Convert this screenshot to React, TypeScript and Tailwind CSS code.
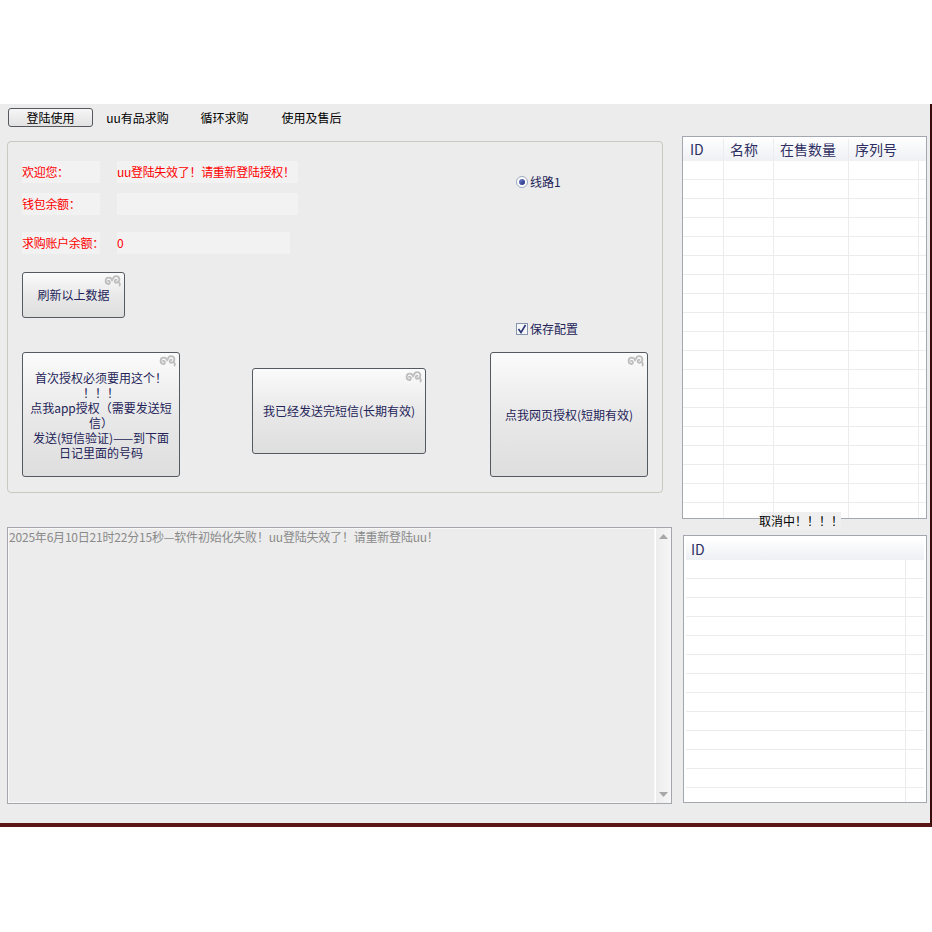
import React from 'react';

const font = "font-['Noto_Sans_CJK_SC',sans-serif]";

function Swirl() {
  return (
    <svg
      className="absolute right-[2px] top-[2px]"
      width="18"
      height="12"
      viewBox="0 0 18 12"
      fill="none"
      stroke="#bdbdbd"
      strokeWidth="1.8"
      strokeLinecap="round"
    >
      <path d="M8 5.5 A3.2 3.2 0 1 0 4.5 9 A1.6 1.6 0 1 0 4 5.8" />
      <path d="M9 4 A3.2 3.2 0 1 1 13 7.5 A2 2 0 0 1 15.5 10.5 M13 7.5 A1.5 1.5 0 1 1 12.5 4.8" />
    </svg>
  );
}

function SkinButton({
  className,
  children,
}: {
  className: string;
  children: React.ReactNode;
}) {
  return (
    <div
      className={`relative flex items-center justify-center rounded-[3px] border border-[#555a60] bg-gradient-to-b from-[#fbfbfb] via-[#e9e9e9] to-[#dedede] text-[12px] text-[#232358] ${className}`}
    >
      <Swirl />
      {children}
    </div>
  );
}

function LabelBox({ w, children }: { w: string; children?: React.ReactNode }) {
  return (
    <div
      className={`flex h-[22px] items-center whitespace-nowrap bg-[#f2f2f2] text-[12px] tracking-[-0.3px] text-[#ff0000] ${w}`}
    >
      {children}
    </div>
  );
}

function Grid({ cols, rows }: { cols: number[]; rows: number }) {
  return (
    <div className="flex flex-col">
      {Array.from({ length: rows }).map((_, r) => (
        <div key={r} className="flex h-[19px] shrink-0 border-b border-[#ececec]">
          {cols.map((c, i) => (
            <div key={i} className="h-full shrink-0 border-r border-[#ececec]" style={{ width: c }} />
          ))}
        </div>
      ))}
    </div>
  );
}

export default function App() {
  const tabs = ['登陆使用', 'uu有品求购', '循环求购', '使用及售后'];

  return (
    <div className={`h-[932px] w-[932px] overflow-hidden bg-white ${font}`}>
      <div className="h-[104px]" />
      <div className="h-[723px] w-[932px] border-b-[4px] border-r-[2px] border-b-[#5a1616] border-r-[#3a0b0b] bg-[#ececec]">
        {/* tabs */}
        <div className="flex gap-[2px] pl-[8px] pt-[4px]">
          {tabs.map((t, i) => (
            <div
              key={t}
              className={`flex h-[19px] w-[85px] items-center justify-center text-[12px] text-black ${
                i === 0
                  ? 'rounded-[3px] border border-[#55585c] bg-gradient-to-b from-[#f6f6f6] to-[#e2e2e2]'
                  : ''
              }`}
            >
              {t}
            </div>
          ))}
        </div>

        <div className="flex">
          {/* left column */}
          <div className="flex w-[672px] shrink-0 flex-col pl-[7px] pt-[14px]">
            <div className="h-[352px] w-[656px] rounded-[4px] border border-[#c9c9bf] pl-[14px] pt-[19px]">
              <div className="flex">
                <div className="flex w-[494px] shrink-0 flex-col">
                  <div className="flex gap-[17px]">
                    <LabelBox w="w-[78px]">欢迎您：</LabelBox>
                    <LabelBox w="w-[181px]">uu登陆失效了！请重新登陆授权！</LabelBox>
                  </div>
                  <div className="mt-[10px] flex gap-[17px]">
                    <LabelBox w="w-[78px]">钱包余额：</LabelBox>
                    <LabelBox w="w-[181px]" />
                  </div>
                  <div className="mt-[17px] flex gap-[17px]">
                    <LabelBox w="w-[78px]">求购账户余额：</LabelBox>
                    <LabelBox w="w-[173px]">0</LabelBox>
                  </div>
                  <SkinButton className="mt-[18px] h-[46px] w-[103px]">刷新以上数据</SkinButton>
                </div>
                <div className="flex flex-col">
                  <div className="mt-[14px] flex h-[13px] items-center gap-[2px] text-[12px] text-[#232358]">
                    <div className="flex h-[12px] w-[12px] items-center justify-center rounded-full border border-[#9aa8bc] bg-white">
                      <div className="h-[6px] w-[6px] rounded-full bg-gradient-to-br from-[#7a86d0] to-[#1c2677]" />
                    </div>
                    <span>线路1</span>
                  </div>
                  <div className="mt-[134px] flex h-[13px] items-center gap-[2px] text-[12px] text-[#232358]">
                    <div className="flex h-[12px] w-[12px] items-center justify-center border border-[#8595ad] bg-[#f4f6fa]">
                      <svg width="10" height="10" viewBox="0 0 10 10" fill="none">
                        <path d="M1.5 5 L4 8.5 L8.5 1" stroke="#2a3478" strokeWidth="1.6" />
                      </svg>
                    </div>
                    <span>保存配置</span>
                  </div>
                </div>
              </div>

              <div className="mt-[17px] flex items-start">
                <SkinButton className="h-[125px] w-[158px] flex-col text-center text-[11px] leading-[15px]">
                  <div>首次授权必须要用这个！</div>
                  <div>！！！</div>
                  <div>点我app授权（需要发送短</div>
                  <div>信）</div>
                  <div className="whitespace-nowrap">发送(短信验证)——到下面</div>
                  <div>日记里面的号码</div>
                </SkinButton>
                <SkinButton className="ml-[72px] mt-[16px] h-[86px] w-[174px] whitespace-nowrap">
                  我已经发送完短信(长期有效)
                </SkinButton>
                <SkinButton className="ml-[64px] h-[125px] w-[158px] whitespace-nowrap">
                  点我网页授权(短期有效)
                </SkinButton>
              </div>
            </div>

            {/* log */}
            <div className="mt-[34px] flex h-[277px] w-[665px] border border-[#a3a7ab]">
              <div className="flex-1 border border-[#f8f8f8] pt-[1px] text-[12px] leading-[14px] tracking-[-0.2px] text-[#8a8a8a]">
                2025年6月10日21时22分15秒—软件初始化失败！uu登陆失效了！请重新登陆uu！
              </div>
              <div className="flex w-[16px] flex-col items-center justify-between border-l border-white bg-gradient-to-r from-[#ededed] to-[#f6f6f6] py-[6px]">
                <svg width="9" height="5" viewBox="0 0 9 5">
                  <path d="M0 5 L4.5 0 L9 5 Z" fill="#a8a8a8" />
                </svg>
                <svg width="9" height="5" viewBox="0 0 9 5">
                  <path d="M0 0 L4.5 5 L9 0 Z" fill="#a8a8a8" />
                </svg>
              </div>
            </div>
          </div>

          {/* right column */}
          <div className="ml-[10px] flex w-[245px] shrink-0 flex-col pt-[9px]">
            <div className="h-[383px] overflow-hidden border border-[#a3a8b0] bg-white">
              <div className="flex h-[24px] items-center bg-gradient-to-b from-white to-[#eef0f4] text-[14px] text-[#2e2e62]">
                <div className="w-[41px] shrink-0 border-r border-[#ececec] pl-[7px]">ID</div>
                <div className="w-[50px] shrink-0 border-r border-[#ececec] pl-[6px]">名称</div>
                <div className="w-[75px] shrink-0 border-r border-[#ececec] pl-[6px]">在售数量</div>
                <div className="w-[69px] shrink-0 pl-[6px]">序列号</div>
              </div>
              <Grid cols={[41, 50, 75, 70]} rows={19} />
            </div>
            <div className="relative -mt-[7px] ml-[79px] flex h-[18px] w-[80px] items-center justify-center whitespace-nowrap bg-[#efefef] text-[12px] text-black">
              取消中！！！！
            </div>
            <div className="ml-[1px] mt-[5px] h-[268px] w-[244px] overflow-hidden border border-[#a3a8b0] bg-white p-[2px]">
              <div className="flex h-[22px] items-center bg-gradient-to-b from-white to-[#eef0f4] pl-[5px] text-[14px] text-[#2e2e62]">
                ID
              </div>
              <Grid cols={[220]} rows={13} />
            </div>
          </div>
        </div>
      </div>
    </div>
  );
}
